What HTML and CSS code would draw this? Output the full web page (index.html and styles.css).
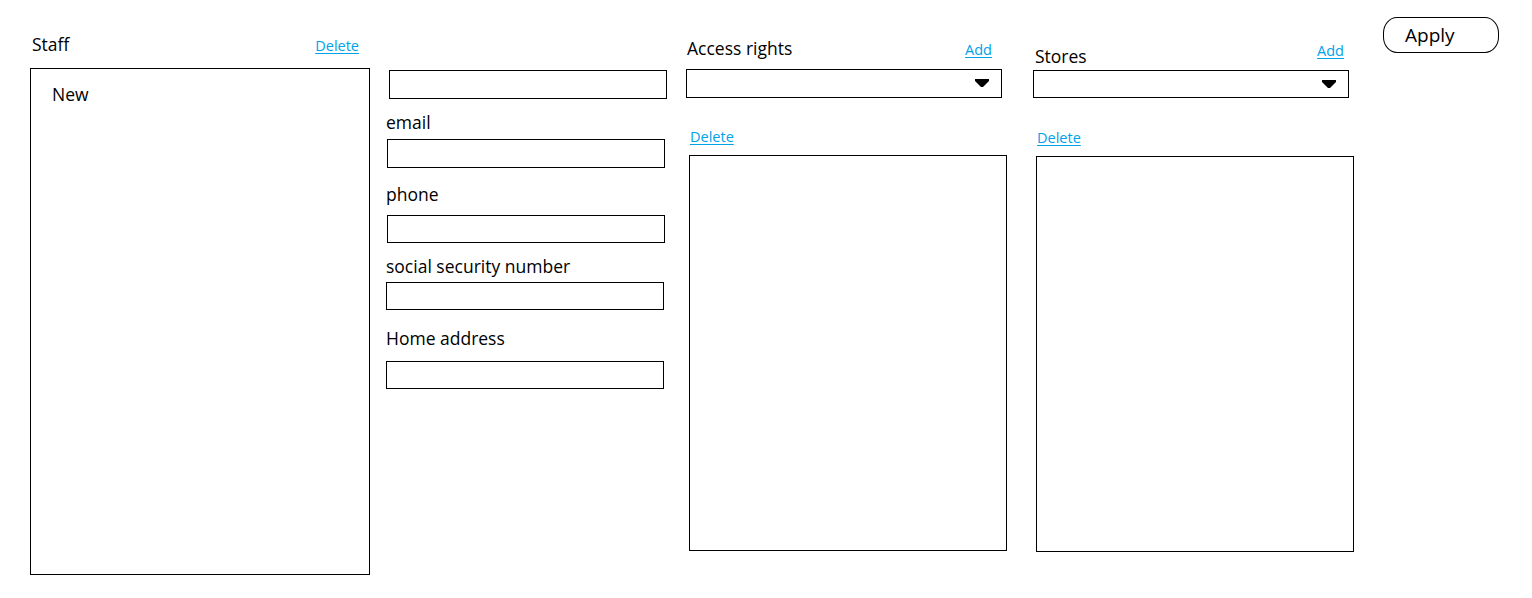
FILE: index.html
```html
<!DOCTYPE html>
<html lang="en">
<head>
<meta charset="utf-8">
<title>Staff</title>
<link rel="stylesheet" href="styles.css">
</head>
<body>
<div class="page">
  <section class="col staff">
    <div class="head staff-head">
      <span class="title">Staff</span>
      <a class="link" href="#">Delete</a>
    </div>
    <div class="listbox staff-list">
      <div class="item">New</div>
    </div>
  </section>

  <section class="col form">
    <input class="field f1" type="text">
    <label class="label l-email">email</label>
    <input class="field f2" type="text">
    <label class="label l-phone">phone</label>
    <input class="field f3" type="text">
    <label class="label l-ssn">social security number</label>
    <input class="field f4" type="text">
    <label class="label l-home">Home address</label>
    <input class="field f5" type="text">
  </section>

  <section class="col access">
    <div class="head access-head">
      <span class="title">Access rights</span>
      <a class="link" href="#">Add</a>
    </div>
    <div class="select access-select">
      <svg class="arrow" width="14" height="8" viewBox="0 0 14 8"><path d="M0 0H14V2L8 8H6L0 2Z" fill="#000"/></svg>
    </div>
    <a class="link del" href="#">Delete</a>
    <div class="listbox side-list"></div>
  </section>

  <section class="col stores">
    <div class="head stores-head">
      <span class="title">Stores</span>
      <a class="link" href="#">Add</a>
    </div>
    <div class="select stores-select">
      <svg class="arrow" width="14" height="8" viewBox="0 0 14 8"><path d="M0 0H14V2L8 8H6L0 2Z" fill="#000"/></svg>
    </div>
    <a class="link del stores-del" href="#">Delete</a>
    <div class="listbox side-list stores-list"></div>
  </section>

  <button class="apply" type="button">Apply</button>
</div>
</body>
</html>
```

FILE: styles.css
```css
* { box-sizing: border-box; }

html, body {
  margin: 0;
  padding: 0;
  background: #fff;
}

body {
  font-family: "Open Sans", "Noto Sans", sans-serif;
  color: #000;
  font-size: 17.5px;
}

.page {
  display: flex;
  align-items: flex-start;
  padding-left: 30px;
  height: 598px;
}

.col {
  display: flex;
  flex-direction: column;
  align-items: flex-start;
}

.title {
  font-size: 17.5px;
  line-height: 24px;
}

.link {
  font-size: 14.5px;
  line-height: 20px;
  color: #00a2e8;
  text-decoration: underline;
  text-underline-offset: 2px;
}

.head {
  display: flex;
  justify-content: space-between;
  align-items: baseline;
}

.listbox {
  border: 1px solid #000;
  background: #fff;
}

/* Staff column */
.staff {
  width: 340px;
  padding-top: 32px;
}
.staff-head {
  width: 340px;
  height: 24px;
  padding-left: 2px;
  padding-right: 11px;
}
.staff-list {
  width: 340px;
  height: 507px;
  margin-top: 12px;
  padding: 13px 0 0 21px;
}
.item {
  font-size: 17.5px;
  line-height: 24px;
}

/* Form column */
.form {
  margin-left: 16px;
  padding-top: 70px;
  width: 281px;
}
.label {
  font-size: 17.5px;
  line-height: 24px;
}
.field {
  display: block;
  width: 278px;
  height: 28px;
  border: 1px solid #000;
  margin: 0;
  padding: 0;
  background: #fff;
  outline: none;
}
.f1 { margin-left: 3px; height: 29px; }
.l-email { margin-top: 11px; }
.f2 { margin-left: 1px; margin-top: 5px; height: 29px; }
.l-phone { margin-top: 14px; }
.f3 { margin-left: 1px; margin-top: 9px; }
.l-ssn { margin-top: 11px; }
.f4 { margin-top: 4px; }
.l-home { margin-top: 16px; }
.f5 { margin-top: 11px; }

/* Access rights column */
.access {
  margin-left: 19px;
  padding-top: 36px;
  width: 321px;
}
.access-head {
  width: 316px;
  height: 24px;
  padding-left: 1px;
  padding-right: 10px;
}
.select {
  width: 316px;
  border: 1px solid #000;
  display: flex;
  justify-content: flex-end;
  align-items: center;
}
.access-select {
  margin-top: 9px;
  height: 29px;
  padding-right: 12px;
  padding-bottom: 2px;
}
.del {
  margin-top: 29px;
  margin-left: 4px;
}
.side-list {
  width: 318px;
  height: 396px;
  margin-top: 8px;
  margin-left: 3px;
}

/* Stores column */
.stores {
  margin-left: 26px;
  padding-top: 41px;
  width: 321px;
}
.stores-head {
  width: 316px;
  height: 29px;
  align-items: flex-start;
  padding-left: 2px;
  padding-right: 5px;
}
.stores-head .title { margin-top: 3px; }
.stores-select {
  height: 28px;
  padding-right: 12px;
}
.stores-del { margin-top: 30px; }

/* Apply button */
.apply {
  margin-left: 29px;
  margin-top: 17px;
  width: 116px;
  height: 36px;
  border: 1px solid #000;
  border-radius: 14px / 16px;
  background: #fff;
  font-family: "Open Sans", "Noto Sans", sans-serif;
  font-size: 19px;
  line-height: 34px;
  color: #000;
  text-align: left;
  padding: 0 0 0 21px;
}
```
